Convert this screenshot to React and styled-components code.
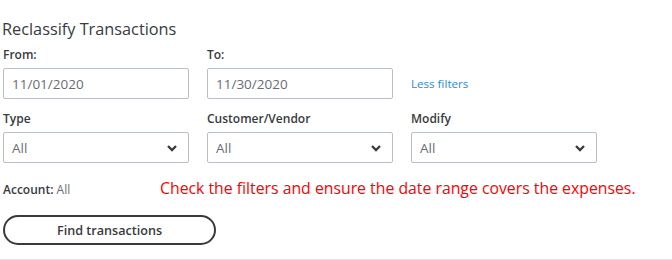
import React from 'react'
import styled, { createGlobalStyle } from 'styled-components'

const Global = createGlobalStyle`
  body {
    margin: 0;
    background: #fff;
    font-family: "Open Sans", "Liberation Sans", sans-serif;
    color: #393a3d;
  }
`

const Page = styled.div`
  width: 672px;
  height: 260px;
  box-sizing: border-box;
  padding: 18px 0 0 3px;
  border-bottom: 1px solid #e6e6e6;
  overflow: hidden;
`

const Title = styled.h2`
  margin: 0 0 0 -1px;
  font-size: 16.3px;
  font-weight: 400;
  line-height: 22px;
  color: #393a3d;
`

const Grid = styled.div`
  display: grid;
  grid-template-columns: 186px 186px 186px;
  column-gap: 18px;
  row-gap: 12px;
  margin-top: 7px;
`

const Field = styled.div`
  display: flex;
  flex-direction: column;
`

const Label = styled.label`
  font-size: 12px;
  font-weight: 600;
  line-height: 16px;
  color: #393a3d;
  margin-bottom: 5px;
`

const Box = styled.div`
  height: 31px;
  box-sizing: border-box;
  border: 1px solid #babec5;
  border-radius: 2px;
  display: flex;
  align-items: center;
  justify-content: space-between;
  padding: 0 10px 0 8px;
  font-size: 13.5px;
  color: #6b6c72;
`

const LinkCell = styled.div`
  display: flex;
  align-items: flex-end;
  padding-bottom: 8px;
`

const Link = styled.a`
  font-size: 11.6px;
  color: #2a8ad8;
  text-decoration: none;
`

const Row = styled.div`
  display: flex;
  align-items: center;
  margin-top: 15px;
  height: 22px;
`

const Account = styled.div`
  width: 157px;
  font-size: 12px;
  font-weight: 600;
  color: #393a3d;
  span {
    font-weight: 400;
    color: #6b6c72;
  }
`

const Note = styled.div`
  font-family: "Open Sans", "Liberation Sans", sans-serif;
  font-size: 15.8px;
  color: #ff0000;
  margin-top: -2px;
`

const Button = styled.button`
  margin-top: 15px;
  width: 213px;
  height: 30px;
  box-sizing: border-box;
  border: 2px solid #393a3d;
  border-radius: 15px;
  background: #fff;
  font-family: "Open Sans", "Liberation Sans", sans-serif;
  font-size: 12.6px;
  font-weight: 600;
  color: #393a3d;
`

const Chevron = () => (
  <svg width="12" height="8" viewBox="0 0 12 8">
    <path d="M2 2 L6 6 L10 2" fill="none" stroke="#393a3d" strokeWidth="2.3" />
  </svg>
)

const Select = ({ label }) => (
  <Field>
    <Label>{label}</Label>
    <Box>
      All
      <Chevron />
    </Box>
  </Field>
)

export default function App() {
  return (
    <>
      <Global />
      <Page>
        <Title>Reclassify Transactions</Title>
        <Grid>
          <Field>
            <Label>From:</Label>
            <Box>11/01/2020</Box>
          </Field>
          <Field>
            <Label>To:</Label>
            <Box>11/30/2020</Box>
          </Field>
          <LinkCell>
            <Link href="#">Less filters</Link>
          </LinkCell>
          <Select label="Type" />
          <Select label="Customer/Vendor" />
          <Select label="Modify" />
        </Grid>
        <Row>
          <Account>
            Account: <span>All</span>
          </Account>
          <Note>Check the filters and ensure the date range covers the expenses.</Note>
        </Row>
        <Button>Find transactions</Button>
      </Page>
    </>
  )
}
